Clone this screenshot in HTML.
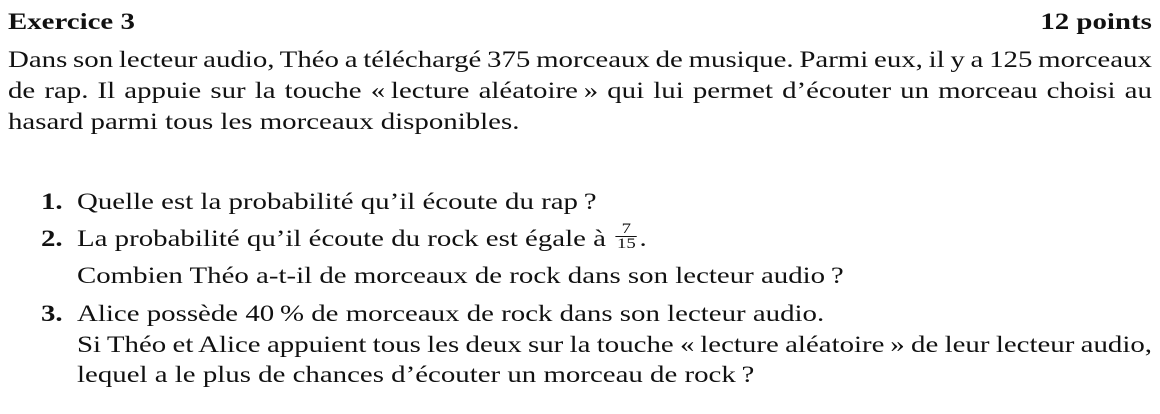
<!DOCTYPE html>
<html><head><meta charset="utf-8"><style>
html,body{margin:0;padding:0;background:#fff;}
body{width:1160px;height:414px;position:relative;overflow:hidden;font-family:"Liberation Serif",serif;font-size:23px;color:#111;}
.l{position:absolute;white-space:nowrap;line-height:26px;transform:scaleX(1.255);transform-origin:0 0;}
.j{left:8px;width:911.5px;text-align:justify;text-align-last:justify;white-space:normal;word-spacing:-4px;}
.n{font-weight:bold;}
.t{left:77px;}
.fr{display:inline-block;vertical-align:middle;text-align:center;font-size:15px;line-height:14px;margin:0 2px;position:relative;top:-4px;}
.fr span{display:block;padding:0 1px;}
.fr .a{border-bottom:1px solid #111;}
</style></head><body>
<div class="l" style="top:9px;left:8px;font-weight:bold;">Exercice 3</div>
<div class="l" style="top:9px;right:8px;font-weight:bold;transform-origin:100% 0;">12 points</div>
<div class="l j" style="top:47px;">Dans son lecteur audio, Théo a téléchargé 375 morceaux de musique. Parmi eux, il y a 125 morceaux</div>
<div class="l j" style="top:78px;">de rap. Il appuie sur la touche «&#8239;lecture aléatoire&#8239;» qui lui permet d’écouter un morceau choisi au</div>
<div class="l" style="top:109px;left:8px;">hasard parmi tous les morceaux disponibles.</div>

<div class="l n" style="top:189px;left:41px;">1.</div>
<div class="l t" style="top:189px;">Quelle est la probabilité qu’il écoute du rap&#8239;?</div>
<div class="l n" style="top:226px;left:41px;">2.</div>
<div class="l t" style="top:226px;">La probabilité qu’il écoute du rock est égale à <span class="fr"><span class="a">7</span><span>15</span></span>.</div>
<div class="l t" style="top:263px;">Combien Théo a-t-il de morceaux de rock dans son lecteur audio&#8239;?</div>
<div class="l n" style="top:301px;left:41px;">3.</div>
<div class="l t" style="top:301px;">Alice possède 40&#8239;% de morceaux de rock dans son lecteur audio.</div>
<div class="l j" style="top:332px;left:77px;width:856.6px;">Si Théo et Alice appuient tous les deux sur la touche «&#8239;lecture aléatoire&#8239;» de leur lecteur audio,</div>
<div class="l t" style="top:362px;">lequel a le plus de chances d’écouter un morceau de rock&#8239;?</div>
</body></html>
